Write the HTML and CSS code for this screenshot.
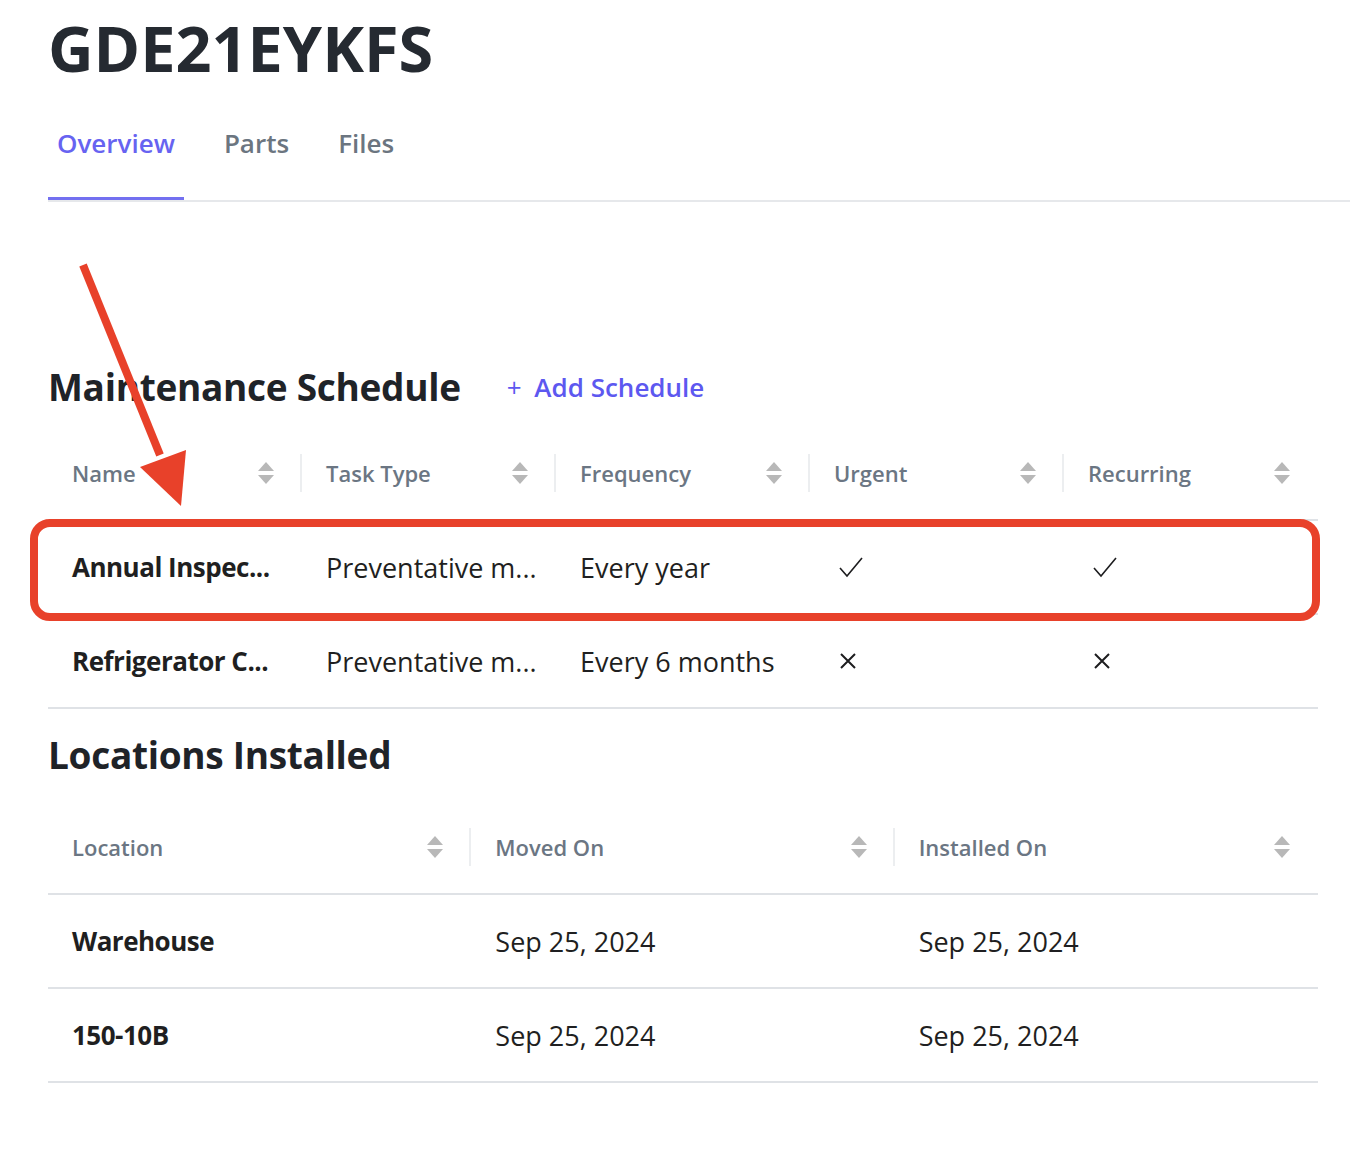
FILE: index.html
```html
<html>
<head>
  <title>GDE21EYKFS</title>
  <link rel="stylesheet" href="styles.css">
</head>
<body>
  <div class="page">
    <h1 class="asset-title">GDE21EYKFS</h1>

    <div class="tabs">
      <a class="tab active">Overview</a>
      <a class="tab">Parts</a>
      <a class="tab">Files</a>
    </div>

    <div class="section-head schedule-head">
      <h2>Maintenance Schedule</h2>
      <a class="add-link"><span class="plus">+</span> Add Schedule</a>
    </div>

    <table class="grid cols-5">
      <thead>
        <tr>
          <th><div class="th-in"><span>Name</span><i class="sort"></i></div></th>
          <th><div class="th-in"><span>Task Type</span><i class="sort"></i></div></th>
          <th><div class="th-in"><span>Frequency</span><i class="sort"></i></div></th>
          <th><div class="th-in"><span>Urgent</span><i class="sort"></i></div></th>
          <th><div class="th-in last"><span>Recurring</span><i class="sort"></i></div></th>
        </tr>
      </thead>
      <tbody>
        <tr>
          <td class="strong">Annual Inspec...</td>
          <td>Preventative m...</td>
          <td>Every year</td>
          <td><svg class="mark" width="26" height="24" viewBox="0 0 26 24"><polyline points="2,13 9,21 24,3" fill="none" stroke="#1d1d1f" stroke-width="1.6"/></svg></td>
          <td><svg class="mark" width="26" height="24" viewBox="0 0 26 24"><polyline points="2,13 9,21 24,3" fill="none" stroke="#1d1d1f" stroke-width="1.6"/></svg></td>
        </tr>
        <tr>
          <td class="strong">Refrigerator C...</td>
          <td>Preventative m...</td>
          <td>Every 6 months</td>
          <td><svg class="mark" width="20" height="20" viewBox="0 0 20 20"><path d="M3 3 L17 17 M17 3 L3 17" stroke="#1d1d1f" stroke-width="2"/></svg></td>
          <td><svg class="mark" width="20" height="20" viewBox="0 0 20 20"><path d="M3 3 L17 17 M17 3 L3 17" stroke="#1d1d1f" stroke-width="2"/></svg></td>
        </tr>
      </tbody>
    </table>

    <div class="section-head locations-head">
      <h2>Locations Installed</h2>
    </div>

    <table class="grid cols-3">
      <thead>
        <tr>
          <th><div class="th-in"><span>Location</span><i class="sort"></i></div></th>
          <th><div class="th-in"><span>Moved On</span><i class="sort"></i></div></th>
          <th><div class="th-in last"><span>Installed On</span><i class="sort"></i></div></th>
        </tr>
      </thead>
      <tbody>
        <tr>
          <td class="strong">Warehouse</td>
          <td>Sep 25, 2024</td>
          <td>Sep 25, 2024</td>
        </tr>
        <tr>
          <td class="strong">150-10B</td>
          <td>Sep 25, 2024</td>
          <td>Sep 25, 2024</td>
        </tr>
      </tbody>
    </table>
  </div>

  <!-- annotation drawn over the screenshot -->
  <div class="callout-box"></div>
  <svg class="callout-arrow" width="200" height="260" viewBox="0 0 200 260">
    <line x1="83" y1="5" x2="160" y2="195" stroke="#e8412a" stroke-width="8"/>
    <polygon points="140,207 186,190 181,246" fill="#e8412a"/>
  </svg>
</body>
</html>
```

FILE: styles.css
```css
body { margin: 0; background: #fff; font-family: "Open Sans", Lato, sans-serif; color: #1f1f21; }
.page { padding: 10px 0 80px 48px; }

.asset-title { margin: 0; font-size: 63px; line-height: 76px; font-weight: 700; color: #252a31; letter-spacing: 0; }

.tabs { display: flex; margin-top: 17px; border-bottom: 2px solid #e6e8eb; }
.tab { padding: 25px 9px 39px; margin-right: 31px; font-size: 26px; line-height: 30px; font-weight: 600;
  color: #6b7580; border-bottom: 3px solid transparent; }
.tab.active { color: #6763f1; border-bottom-color: #7370f0; }

.section-head { display: flex; align-items: center; gap: 46px; }
.section-head h2 { margin: 0; font-size: 37px; line-height: 44px; font-weight: 700; color: #1f2328; letter-spacing: -0.3px; }
.schedule-head { margin-top: 163px; margin-bottom: 17px; }
.locations-head { margin-top: 24px; margin-bottom: 23px; }
.add-link { font-size: 26px; font-weight: 600; color: #5d58f0; }
.add-link .plus { font-weight: 400; margin-right: 6px; }

.grid { width: 1270px; border-collapse: collapse; table-layout: fixed; }
.grid th { height: 94px; padding: 0; text-align: left; vertical-align: middle; border-bottom: 2px solid #dfe2e6; }
.th-in { display: flex; align-items: center; justify-content: space-between; height: 38px;
  padding: 0 26px 0 24px; border-right: 2px solid #eceef0; font-size: 22px; font-weight: 600; color: #6b7683; }
.th-in.last { border-right: none; padding-right: 28px; }
.sort { display: flex; flex-direction: column; gap: 4px; }
.sort::before, .sort::after { content: ""; width: 0; height: 0; border-left: 8px solid transparent; border-right: 8px solid transparent; }
.sort::before { border-bottom: 9px solid #b8b8b8; }
.sort::after { border-top: 9px solid #b8b8b8; }

.grid td { height: 94px; padding: 0 12px 0 24px; font-size: 27px; color: #1f1f21; border-bottom: 2px solid #dfe2e6;
  white-space: nowrap; vertical-align: middle; }
.grid td.strong { font-size: 26px; font-weight: 700; letter-spacing: -0.5px; }
.mark { display: block; margin-left: 4px; }

.callout-box { position: absolute; left: 30px; top: 519px; width: 1274px; height: 86px;
  border: 8px solid #e8412a; border-radius: 20px; }
.callout-arrow { position: absolute; left: 0; top: 260px; }
```
